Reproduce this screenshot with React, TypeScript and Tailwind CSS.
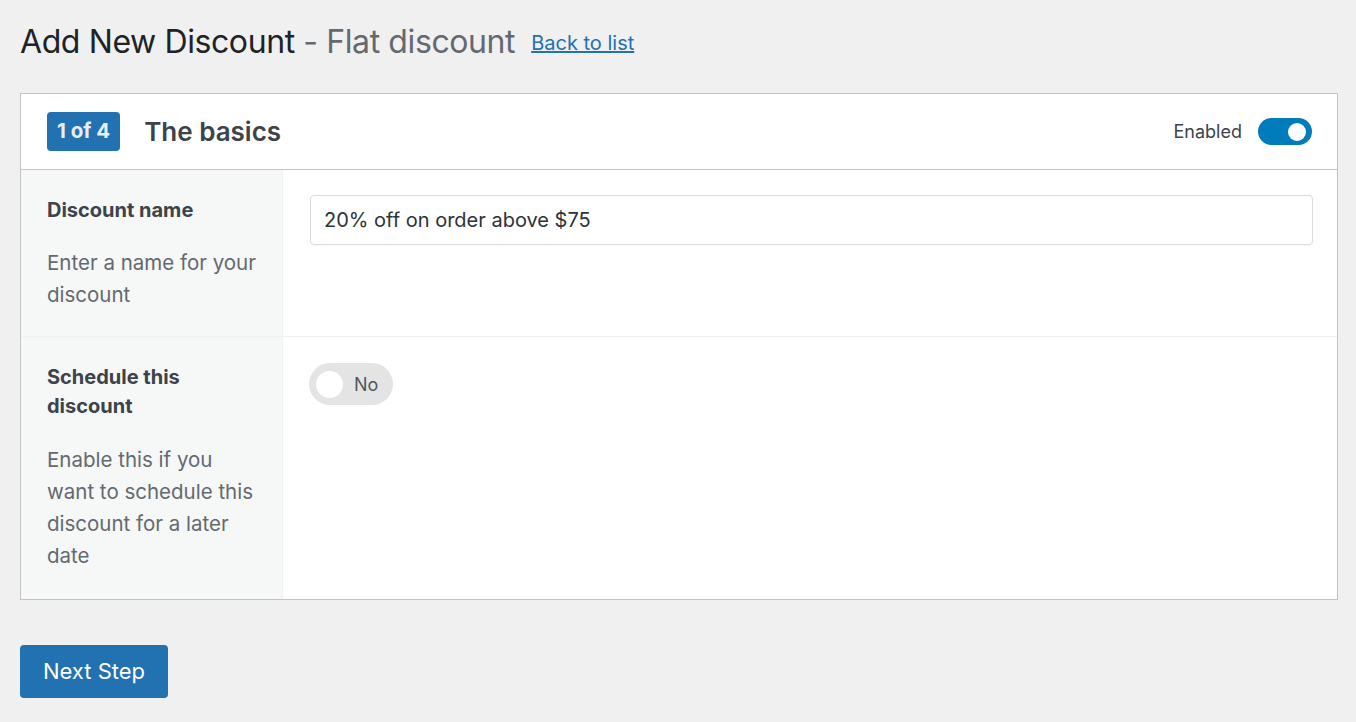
import { useState } from 'react'

const FONT = { fontFamily: 'Inter, "Noto Sans", sans-serif' }

function Toggle({ on, onChange }: { on: boolean; onChange: () => void }) {
  return (
    <button
      onClick={onChange}
      className="relative inline-flex h-[27px] w-[54px] items-center rounded-full bg-[#007cba]"
      aria-label="Enabled"
    >
      <span
        className={
          on
            ? 'absolute right-[6px] h-[18px] w-[18px] rounded-full bg-white'
            : 'absolute left-[6px] h-[18px] w-[18px] rounded-full bg-white'
        }
      />
    </button>
  )
}

function SchedulePill({ on, onChange }: { on: boolean; onChange: () => void }) {
  return (
    <button
      onClick={onChange}
      className="flex h-[42px] w-[84px] items-center gap-[11px] rounded-full bg-[#e4e4e5] pl-[7px]"
    >
      <span className="h-[27px] w-[27px] rounded-full bg-white" />
      <span className="text-[18px] text-[#50575e]">{on ? 'Yes' : 'No'}</span>
    </button>
  )
}

export default function App() {
  const [enabled, setEnabled] = useState(true)
  const [scheduled, setScheduled] = useState(false)
  const [name, setName] = useState('20% off on order above $75')

  return (
    <div className="min-h-[722px] bg-[#f0f0f1] px-5 pt-[20px]" style={FONT}>
      <div className="flex items-center gap-4">
        <h1 className="text-[32px] leading-[44px] tracking-[-0.4px] text-[#1d2327]">
          Add New Discount <span className="text-[#646970]">- Flat discount</span>
        </h1>
        <a href="#" className="mt-[2px] text-[20px] text-[#2271b1] underline">
          Back to list
        </a>
      </div>

      <div className="mt-[29px] w-[1318px] border border-[#c3c4c7] bg-white">
        <div className="flex h-[76px] items-center justify-between border-b border-[#c3c4c7] pl-[26px] pr-[25px]">
          <div className="flex items-center gap-6">
            <span className="flex h-[39px] items-center rounded-[4px] bg-[#2271b1] px-[10px] text-[20.5px] font-bold text-[#e6eef6]">
              1 of 4
            </span>
            <span className="text-[26px] font-semibold text-[#3c434a]">The basics</span>
          </div>
          <div className="flex items-center gap-4">
            <span className="text-[18px] text-[#3c434a]">Enabled</span>
            <Toggle on={enabled} onChange={() => setEnabled(!enabled)} />
          </div>
        </div>

        <div className="flex border-b border-[#f0f0f1]">
          <div className="w-[262px] shrink-0 border-r border-[#f0f0f1] bg-[#f6f7f7] pb-[25px] pl-[26px] pr-[22px] pt-[26px]">
            <div className="text-[20px] font-bold leading-[29px] text-[#3c434a]">Discount name</div>
            <p className="mt-[22px] text-[20.5px] leading-[32px] text-[#646970]">Enter a name for your discount</p>
          </div>
          <div className="flex-1 pl-[27px] pr-[24px] pt-[25px]">
            <input
              value={name}
              onChange={(e) => setName(e.target.value)}
              className="h-[50px] w-full rounded-[4px] border border-[#dcdcde] px-[13px] text-[20px] text-[#2c3338] shadow-[0_1px_2px_rgba(0,0,0,0.04)] outline-none"
            />
          </div>
        </div>

        <div className="flex">
          <div className="w-[262px] shrink-0 border-r border-[#f0f0f1] bg-[#f6f7f7] pb-[27px] pl-[26px] pr-[22px] pt-[26px]">
            <div className="text-[20px] font-bold leading-[29px] text-[#3c434a]">Schedule this discount</div>
            <p className="mt-[23px] text-[20.5px] leading-[32px] text-[#646970]">
              Enable this if you want to schedule this discount for a later date
            </p>
          </div>
          <div className="flex-1 pl-[26px] pt-[26px]">
            <SchedulePill on={scheduled} onChange={() => setScheduled(!scheduled)} />
          </div>
        </div>
      </div>

      <button className="mt-[45px] h-[53px] w-[148px] rounded-[4px] bg-[#2271b1] text-[22px] text-white">
        Next Step
      </button>
    </div>
  )
}
